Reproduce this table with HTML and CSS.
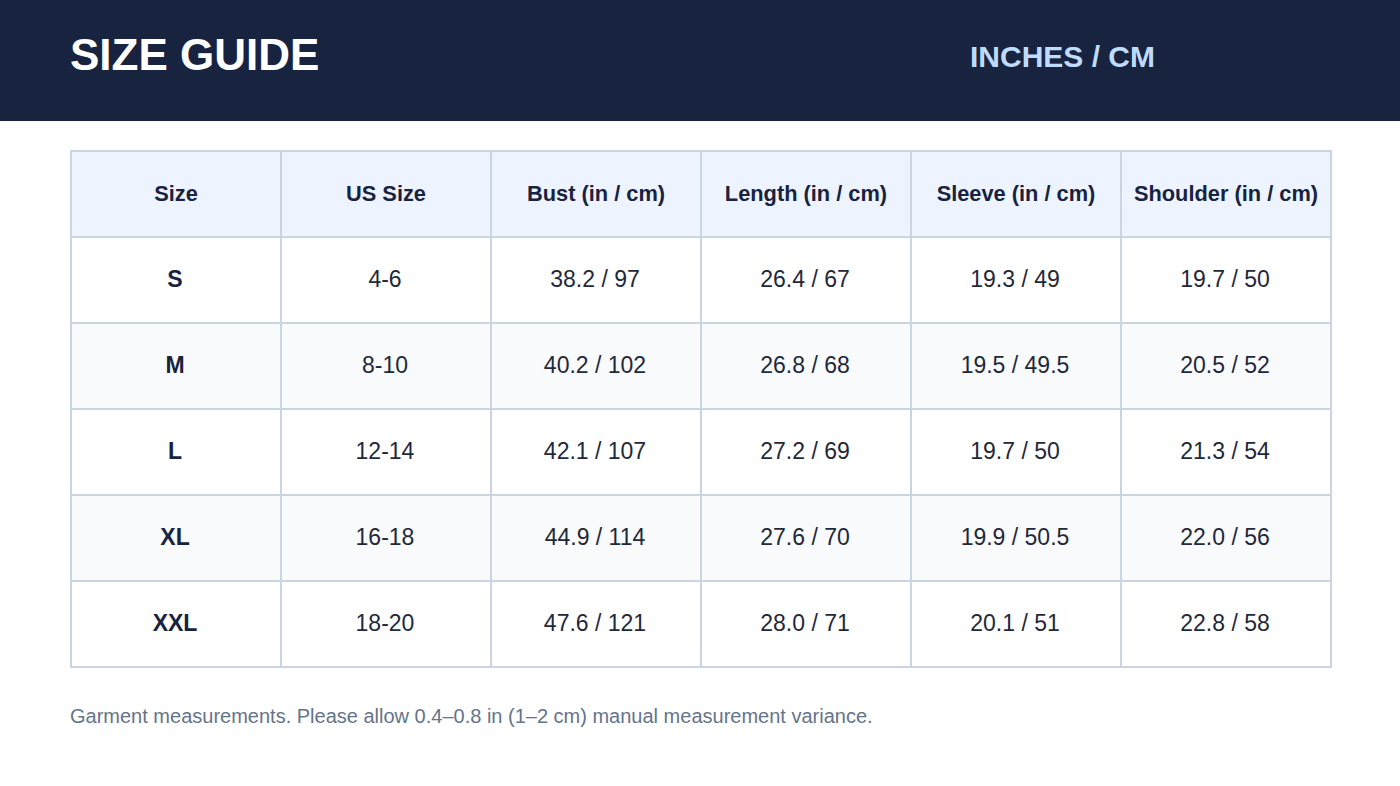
FILE: index.html
```html
<!DOCTYPE html>
<html>
<head>
<meta charset="utf-8">
<link rel="stylesheet" href="styles.css">
</head>
<body>
<header class="topbar">
  <h1 class="title">SIZE GUIDE</h1>
  <div class="units">INCHES / CM</div>
</header>
<main class="content">
  <table class="chart">
    <thead>
      <tr><th>Size</th><th>US Size</th><th>Bust (in / cm)</th><th>Length (in / cm)</th><th>Sleeve (in / cm)</th><th>Shoulder (in / cm)</th></tr>
    </thead>
    <tbody>
      <tr><td class="sz">S</td><td>4-6</td><td>38.2 / 97</td><td>26.4 / 67</td><td>19.3 / 49</td><td>19.7 / 50</td></tr>
      <tr><td class="sz">M</td><td>8-10</td><td>40.2 / 102</td><td>26.8 / 68</td><td>19.5 / 49.5</td><td>20.5 / 52</td></tr>
      <tr><td class="sz">L</td><td>12-14</td><td>42.1 / 107</td><td>27.2 / 69</td><td>19.7 / 50</td><td>21.3 / 54</td></tr>
      <tr><td class="sz">XL</td><td>16-18</td><td>44.9 / 114</td><td>27.6 / 70</td><td>19.9 / 50.5</td><td>22.0 / 56</td></tr>
      <tr><td class="sz">XXL</td><td>18-20</td><td>47.6 / 121</td><td>28.0 / 71</td><td>20.1 / 51</td><td>22.8 / 58</td></tr>
    </tbody>
  </table>
  <p class="note">Garment measurements. Please allow 0.4–0.8 in (1–2 cm) manual measurement variance.</p>
</main>
</body>
</html>
```
FILE: styles.css
```css
* { box-sizing: border-box; }
html, body { margin: 0; padding: 0; background: #ffffff; }
body { font-family: "Liberation Sans", Arial, sans-serif; color: #1e293b; }

.topbar {
  height: 121px;
  background: #18233f;
  display: grid;
  grid-template-columns: 1fr 430px;
  align-items: center;
  padding: 0 0 0 70px;
}
.title {
  margin: 0;
  font-size: 44px;
  font-weight: 700;
  color: #ffffff;
  line-height: 1;
  padding-bottom: 12px;
}
.units {
  font-size: 30px;
  font-weight: 700;
  color: #bfdbfe;
  line-height: 1;
  padding-bottom: 8px;
}

.content { padding: 29px 68px 0 70px; }

.chart {
  width: 1262px;
  table-layout: fixed;
  border-collapse: collapse;
}
.chart th, .chart td {
  border: 2px solid #cbd5e1;
  height: 86px;
  text-align: center;
  vertical-align: middle;
  padding: 0;
}
.chart th {
  background: #eef4ff;
  font-size: 21.8px;
  font-weight: 700;
  color: #18233f;
  padding-bottom: 0;
}
.chart td {
  font-size: 23px;
  color: #1e293b;
  background: #ffffff;
  padding: 0 2px 2px 0;
}
.chart tbody tr:nth-child(even) td { background: #f8fafc; }
.chart td.sz { font-weight: 700; color: #18233f; }

.note {
  margin: 37px 0 0;
  font-size: 20px;
  color: #64748b;
}
```
